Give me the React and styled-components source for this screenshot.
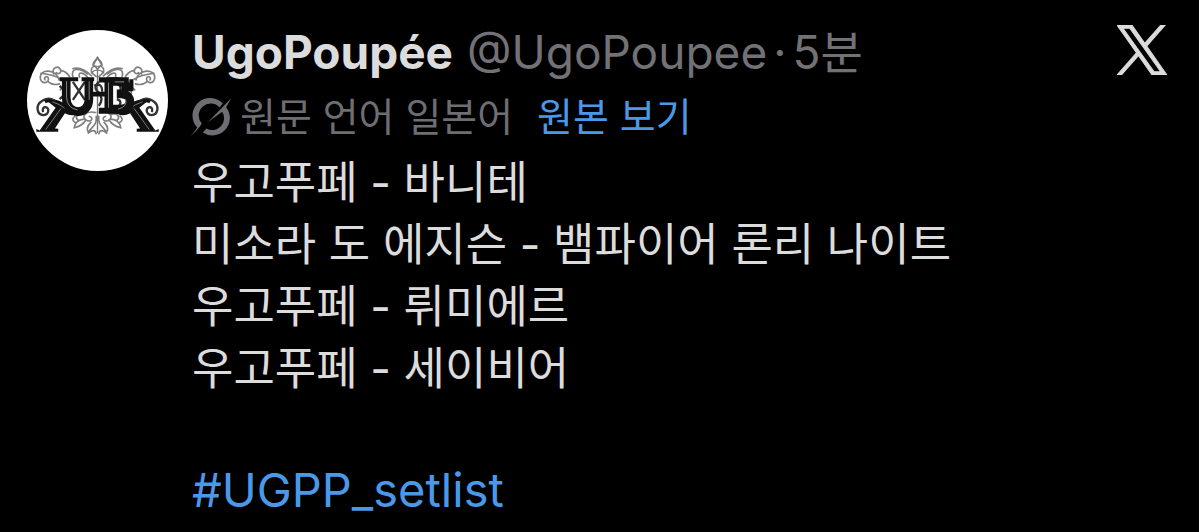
import React from "react";
import styled, { createGlobalStyle } from "styled-components";

const Global = createGlobalStyle`
  body {
    margin: 0;
    background: #000;
    color: #dcdcdc;
    font-family: Inter, "Noto Sans CJK KR", sans-serif;
  }
`;

const Post = styled.article`
  display: flex;
  align-items: flex-start;
  gap: 24px;
  padding: 20px 32px 8px 27px;
`;

const Avatar = styled.svg`
  flex: none;
  width: 141px;
  height: 141px;
  margin-top: 10px;
`;

const Content = styled.div`
  flex: 1;
  min-width: 0;
`;

const Header = styled.header`
  display: flex;
  align-items: center;
  height: 64px;
  font-size: 46px;
  line-height: 64px;
  white-space: nowrap;
`;

const Name = styled.a`
  margin-right: 14px;
  color: #dcdcdc;
  font-weight: 650;
  text-decoration: none;
`;

const Meta = styled.span`
  display: flex;
  gap: 6px;
  color: #727276;
`;

const Translation = styled.div`
  display: flex;
  align-items: center;
  height: 66px;
  color: #6e6e72;
  font-size: 39px;
  font-weight: 400;
  line-height: 64px;
  white-space: nowrap;
`;

const SlashIcon = styled.svg`
  width: 42px;
  height: 40px;
  margin: 0 8px 0 -2px;
`;

const ShowOriginal = styled.button`
  margin: 0 0 0 24px;
  padding: 0;
  border: 0;
  background: none;
  color: #4a99e9;
  font: inherit;
  cursor: pointer;
`;

const Body = styled.p`
  margin: 2px 0 0;
  font-size: 45px;
  font-weight: 400;
  line-height: 62px;
`;

const Tags = styled.p`
  margin: 59px 0 0;
  font-size: 47px;
  line-height: 62px;
`;

const Tag = styled.a`
  color: #4a99e9;
  text-decoration: none;
`;

const Brand = styled.svg`
  flex: none;
  width: 50px;
  height: 50px;
  margin-top: 5px;
`;

const lines = [
  "우고푸페 - 바니테",
  "미소라 도 에지슨 - 뱀파이어 론리 나이트",
  "우고푸페 - 뤼미에르",
  "우고푸페 - 세이비어",
];

function Ornament() {
  return (
    <g fill="none" stroke="#808080" strokeWidth="5" strokeLinecap="round">
      <path d="M228 168C202 150 216 134 230 138M218 134C218 120 228 122 232 110M158 168C150 142 176 140 202 160M158 144Q184 136 214 166M178 170C172 152 190 154 204 172" />
      <path d="M116 178C108 144 58 144 60 172C62 192 88 190 84 172C80 164 70 170 74 178M62 158C80 160 104 164 122 176M100 160C94 142 112 134 120 146C126 156 114 164 108 156M124 150Q138 152 148 168" />
      <path d="M84 184Q98 196 118 190M120 208Q136 190 130 220M226 276C196 270 180 290 200 300C216 306 220 290 208 288M228 288C232 316 214 316 204 338M204 338Q224 322 228 340M192 282C168 276 164 292 174 300M192 296Q166 298 162 322Q186 316 196 300M164 286Q150 300 168 308M212 306Q196 322 204 334" />
    </g>
  );
}

function Leg() {
  return (
    <g>
      <path d="M58 330L106 262L82 242C94 226 130 246 150 258C162 264 176 256 186 268C178 286 150 288 134 278L104 324L114 325V334H48V326Z" fill="#111" />
      <path d="M102 240C80 226 48 244 52 268C56 290 86 288 84 268C82 256 64 258 68 272" fill="none" stroke="#333" strokeWidth="7" strokeLinecap="round" />
      <path d="M74 244Q92 234 116 254" fill="none" stroke="#111" strokeWidth="9" />
      <path d="M76 328L122 264M96 244Q118 250 138 266Q152 276 166 270" fill="none" stroke="#777" strokeWidth="3" />
    </g>
  );
}

function AvatarLogo() {
  return (
    <Avatar viewBox="20 28 424 424" role="img" aria-label="UgoPoupée">
      <circle cx="232" cy="240" r="212" fill="#fff" />
      <Ornament />
      <g transform="translate(464 0) scale(-1 1)">
        <Ornament />
      </g>
      <path d="M232 112L244 132L232 146L220 132ZM232 148V338M212 158Q232 138 252 158" fill="none" stroke="#777" strokeWidth="4" />
      <Leg />
      <g transform="translate(464 0) scale(-1 1)">
        <Leg />
      </g>
      <g fill="none" stroke="#333" strokeWidth="7">
        <path d="M158 184L194 238M194 184L158 238M236 184Q216 202 236 216Q252 234 236 256M222 196Q246 184 246 214M294 190Q310 204 294 218M290 236Q310 242 294 260M118 196L140 216L118 236" />
      </g>
      <g fill="none" stroke="#111" strokeWidth="26">
        <path d="M138 176V232C138 286 206 286 206 238V176" />
        <path d="M266 176V270M266 266H300C336 266 340 224 306 220H290M318 212V200Q316 183 290 183H266" />
      </g>
      <path d="M118 170H174V182H118ZM184 170H222V182H184ZM236 170H326V186H236ZM236 262H304V280H236ZM208 214H266V228H208ZM328 176H340V212H326Z" fill="#111" />
      <path d="M139 182V232Q142 264 172 268M207 182V238M265 186V262M284 184H312M316 236Q324 258 294 266" fill="none" stroke="#888" strokeWidth="3" />
    </Avatar>
  );
}

export default function App() {
  return (
    <>
      <Global />
      <Post>
        <AvatarLogo />
        <Content>
          <Header>
            <Name href="#profile">UgoPoupée</Name>
            <Meta>
              <span>@UgoPoupee</span>
              <span>·</span>
              <time>5분</time>
            </Meta>
          </Header>
          <Translation>
            <SlashIcon viewBox="12 6 128 120" aria-hidden="true">
              <path
                d="M34 98A53 53 0 0 1 112 25L102 37A36 36 0 0 0 48 86Q40 102 14 124Q28 108 34 98Z"
                fill="currentColor"
              />
              <path
                d="M66 82L108 39L138 8L122 36A53 53 0 0 1 51 113L62 101A36 36 0 0 0 110 50Z"
                fill="currentColor"
              />
            </SlashIcon>
            <span>원문 언어 일본어</span>
            <ShowOriginal type="button">원본 보기</ShowOriginal>
          </Translation>
          <Body>
            {lines.map((line) => (
              <React.Fragment key={line}>
                {line}
                <br />
              </React.Fragment>
            ))}
          </Body>
          <Tags>
            <Tag href="#UGPP_setlist">#UGPP_setlist</Tag>
          </Tags>
        </Content>
        <Brand viewBox="0 0 24 24" role="img" aria-label="X">
          <path
            fill="#dcdcdc"
            stroke="#dcdcdc"
            strokeWidth="0.5"
            d="M14.258 10.152 23.176 0h-2.113l-7.747 8.813L7.133 0H0l9.352 13.328L0 23.973h2.113l8.176-9.309 6.531 9.309h7.133zm-2.895 3.293-.949-1.328L2.875 1.56h3.246l6.086 8.523.945 1.328 7.91 11.078h-3.246z"
          />
        </Brand>
      </Post>
    </>
  );
}
